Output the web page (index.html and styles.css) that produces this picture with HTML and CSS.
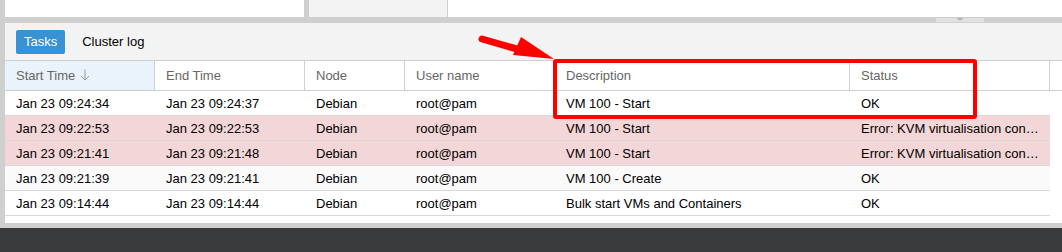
FILE: index.html
```html
<!DOCTYPE html>
<html><head>
<meta charset="utf-8">
<title>Tasks</title>
<link rel="stylesheet" href="styles.css"></head><body>
<div class="top">
    <div class="pane pane-a"></div>
    <div class="pane pane-b"></div>
    <div class="pane pane-c"></div>
</div>
<div class="splitter"><div class="collapser"><span class="tri"></span></div></div>

<div class="logpanel">
    <div class="tbar">
        <span class="btn active">Tasks</span>
        <span class="btn">Cluster log</span>
    </div>

    <div class="grid">
        <div class="hdr">
            <div class="hcell sorted">Start Time
                <svg class="sortarrow" width="10" height="12" viewBox="0 0 10 12"><path d="M5 0.5V11M1 7l4 4 4-4" fill="none" stroke="#999" stroke-width="1"/></svg>
            </div>
            <div class="hcell">End Time</div>
            <div class="hcell">Node</div>
            <div class="hcell">User name</div>
            <div class="hcell">Description</div>
            <div class="hcell">Status</div>
            <div class="hfill"></div>
        </div>

        <div class="row">
            <div class="cell">Jan 23 09:24:34</div><div class="cell">Jan 23 09:24:37</div><div class="cell">Debian</div>
            <div class="cell">root@pam</div><div class="cell">VM 100 - Start</div><div class="cell">OK</div>
        </div>
        <div class="row failed">
            <div class="cell">Jan 23 09:22:53</div><div class="cell">Jan 23 09:22:53</div><div class="cell">Debian</div>
            <div class="cell">root@pam</div><div class="cell">VM 100 - Start</div><div class="cell">Error: KVM virtualisation configured, but not available</div>
        </div>
        <div class="row failed">
            <div class="cell">Jan 23 09:21:41</div><div class="cell">Jan 23 09:21:48</div><div class="cell">Debian</div>
            <div class="cell">root@pam</div><div class="cell">VM 100 - Start</div><div class="cell">Error: KVM virtualisation configured, but not available</div>
        </div>
        <div class="row alt">
            <div class="cell">Jan 23 09:21:39</div><div class="cell">Jan 23 09:21:41</div><div class="cell">Debian</div>
            <div class="cell">root@pam</div><div class="cell">VM 100 - Create</div><div class="cell">OK</div>
        </div>
        <div class="row">
            <div class="cell">Jan 23 09:14:44</div><div class="cell">Jan 23 09:14:44</div><div class="cell">Debian</div>
            <div class="cell">root@pam</div><div class="cell">Bulk start VMs and Containers</div><div class="cell">OK</div>
        </div>
    </div>

    <!-- annotation drawn over the screenshot -->
    <div class="markbox"></div>
    <svg class="arrow" width="90" height="40" viewBox="0 0 90 40">
        <path d="M6 4 L48 16" stroke="#ff0000" stroke-width="7" stroke-linecap="round" fill="none"/>
        <polygon points="45,2 37,20 78,24" fill="#ff0000"/>
    </svg>
</div>
<div class="bottombar"></div>
</body></html>
```

FILE: styles.css
```css
html,body{margin:0;padding:0;}
body{width:1062px;height:252px;overflow:hidden;background:#cfcfcf;font-family:"Liberation Sans",Arial,Helvetica,sans-serif;font-size:13px;color:#000;}

.top{display:flex;height:17px;padding-left:5px;}
.pane{height:17px;}
.pane-a{width:299px;background:#fff;margin-right:5px;}
.pane-b{width:138px;background:#f3f3f3;border-right:1px solid #cfcfcf;}
.pane-c{flex:1;background:#fff;}

.splitter{height:5px;padding-left:936px;}
.collapser{width:48px;height:4px;margin-top:1px;background:#e2e2e2;display:flex;justify-content:center;}
.tri{width:0;height:0;border-left:4px solid transparent;border-right:4px solid transparent;border-top:3px solid #b5b5b5;}

.logpanel{position:relative;margin-left:5px;height:200px;background:#fff;}

.tbar{height:37px;background:#f3f3f3;display:flex;align-items:center;padding-left:11px;}
.btn{display:inline-block;height:24px;line-height:24px;padding:0 8px;border-radius:2px;margin-right:3px;}
.btn.active{background:#3892d4;color:#fff;}
.btn + .btn{margin-left:6px;}

.grid{width:1057px;}
.hdr{display:flex;height:29px;border-top:1px solid #cfcfcf;border-bottom:1px solid #cfcfcf;}
.hcell{box-sizing:border-box;height:29px;line-height:29px;padding-left:11px;color:#666;border-right:1px solid #cfcfcf;white-space:nowrap;}
.hcell.sorted{background:#eaf3fb;}
.sortarrow{vertical-align:-1px;margin-left:1px;}
.hfill{flex:1;}

.row{display:flex;width:1045px;height:24px;border-bottom:1px solid #d8d8d8;background:#fff;}
.row.failed{background:#f3d6d7;}
.row.alt{background:#fafafa;}
.cell{box-sizing:border-box;height:24px;line-height:25px;padding:0 10px 0 11px;white-space:nowrap;overflow:hidden;text-overflow:ellipsis;}

.hcell:nth-child(1),.cell:nth-child(1){width:150px;}
.hcell:nth-child(2),.cell:nth-child(2){width:150px;}
.hcell:nth-child(3),.cell:nth-child(3){width:100px;}
.hcell:nth-child(4),.cell:nth-child(4){width:150px;}
.hcell:nth-child(5),.cell:nth-child(5){width:295px;}
.hcell:nth-child(6),.cell:nth-child(6){width:200px;}

.markbox{position:absolute;left:548px;top:36px;width:416px;height:52px;border:4px solid #ff0000;border-radius:3px;}
.arrow{position:absolute;left:471px;top:12px;}

.bottombar{height:25px;margin-top:5px;background:#3a3b3d;}
```
